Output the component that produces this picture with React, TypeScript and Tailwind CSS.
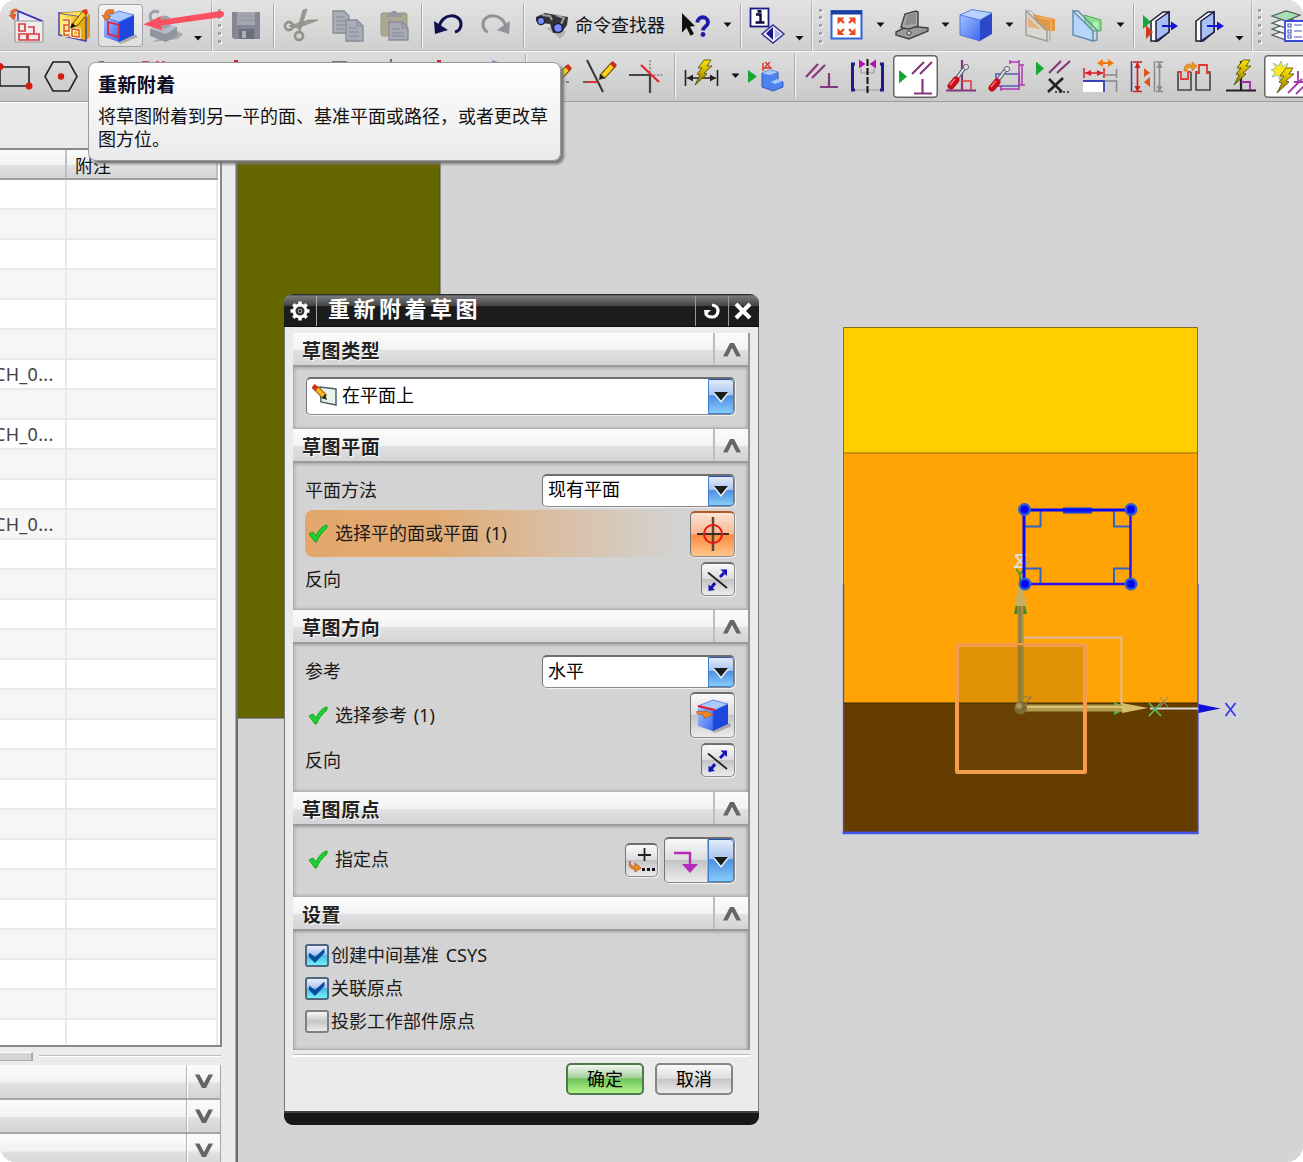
import React from "react";

type Kids = { children?: React.ReactNode };

const FONT = "font-['Noto_Sans','Noto_Sans_CJK_SC',sans-serif]";

/* A toolbar slot; its drawing uses window coordinates. */
function Slot({ x, w, y = 4, className = "", children }: { x: number; w: number; y?: number; className?: string } & Kids) {
  return (
    <div className={"h-[43px] shrink-0 " + className}>
      <svg width={w} height={43} viewBox={`${x} ${y} ${w} 43`} fill="none" className="block">
        {children}
      </svg>
    </div>
  );
}

function Caret({ x, w, cx, cy, y = 4 }: { x: number; w: number; cx: number; cy: number; y?: number }) {
  return (
    <Slot x={x} w={w} y={y}>
      <path d={`M${cx - 4} ${cy - 2}h8l-4 4.5z`} fill="#111" />
    </Slot>
  );
}

function Sep({ className }: { className: string }) {
  return (
    <div className={"flex h-[44px] shrink-0 justify-center " + className}>
      <div className="w-px bg-[#a9a9a9]" />
      <div className="w-px bg-[#f6f6f6]" />
    </div>
  );
}

function GroupEdge({ className }: { className: string }) {
  return (
    <div className={"flex h-[50px] shrink-0 justify-center " + className}>
      <div className="w-px bg-[#b0b0b0]" />
      <div className="w-px bg-[#f3f3f3]" />
    </div>
  );
}

function Grip({ className }: { className: string }) {
  return (
    <div className={"flex h-[34px] shrink-0 flex-col items-center justify-between " + className}>
      {[0, 1, 2, 3, 4].map((i) => (
        <div key={i} className="h-[3px] w-[3px] bg-[#a2a2a2] shadow-[1px_1px_0_#fff]" />
      ))}
    </div>
  );
}

function Cube({ dx = 0, dy = 0 }: { dx?: number; dy?: number }) {
  return (
    <g transform={`translate(${dx} ${dy})`}>
      <path d="M14 33l18-8 3 3-17 7z" fill="#777" opacity=".5" />
      <path d="M1 8L16 13V33L1 28z" fill="url(#cubeL)" />
      <path d="M16 13L31 6V26L16 33z" fill="#1f46dd" />
      <path d="M1 8L16 2 31 6 16 13z" fill="#a9cbff" />
      <path d="M1 8L16 2 31 6 16 13z M16 13V33" fill="none" stroke="#3a62dc" strokeWidth=".7" />
    </g>
  );
}

function Defs() {
  return (
    <svg width="0" height="0" className="absolute">
      <defs>
        <linearGradient id="cubeL" x1="0" y1="0" x2="1" y2="1">
          <stop offset="0" stopColor="#a4c4ff" />
          <stop offset="1" stopColor="#3b66ef" />
        </linearGradient>
        <linearGradient id="bolt" x1="0" y1="0" x2="0" y2="1">
          <stop offset="0" stopColor="#ffe600" />
          <stop offset="1" stopColor="#8a7400" />
        </linearGradient>
        <linearGradient id="gold" x1="0" y1="0" x2="1" y2="0">
          <stop offset="0" stopColor="#fff36a" />
          <stop offset="1" stopColor="#e5a000" />
        </linearGradient>
      </defs>
    </svg>
  );
}

function Pencil({ x, y }: { x: number; y: number }) {
  return (
    <g transform={`translate(${x} ${y})`}>
      <path d="M1 15L13 2" stroke="#5c4a00" strokeWidth="6.5" />
      <path d="M2 14L12 3" stroke="#ffd319" strokeWidth="4.5" />
      <path d="M11 4L14 1" stroke="#d02a1a" strokeWidth="5.5" />
      <path d="M-2 18l1-6 5 4z" fill="#222" />
    </g>
  );
}

function Bolt({ x, y }: { x: number; y: number }) {
  return (
    <path
      transform={`translate(${x} ${y})`}
      d="M9 0L16 0 12 6 17 6 9 13 12 14 0 25 5 15 2 14 7 8 3 8z"
      fill="url(#bolt)"
      stroke="#4b4300"
      strokeWidth=".8"
    />
  );
}

function Screwdriver({ x, y }: { x: number; y: number }) {
  return (
    <g transform={`translate(${x} ${y})`}>
      <path d="M9 15L18 3" stroke="#59606c" strokeWidth="4" />
      <path d="M9 15L18 3" stroke="#dfe3ea" strokeWidth="2" />
      <circle cx="18" cy="4" r="2.6" fill="#dfe3ea" stroke="#667" />
      <path d="M3 23L8 17" stroke="#c3101d" strokeWidth="7" strokeLinecap="round" />
      <path d="M2 22L7 16" stroke="#ff7a7a" strokeWidth="1.5" />
    </g>
  );
}

const rowBg = "bg-gradient-to-b flex shrink-0 items-center overflow-hidden";

function TopRow() {
  return (
    <div className={rowBg + " h-[51px] from-[#e3e3e3] to-[#cfcfcf] shadow-[inset_0_-1px_0_#bcbcbc]"}>
      <Slot x={0} w={50}>
        <path d="M18 25V11L42 21V25" fill="#e6ecf3" stroke="#4038b8" strokeWidth="1.4" />
        <path d="M15 21H43V42H15z" fill="#ececec" stroke="#999" strokeWidth="1.2" />
        <path d="M18 11L42 21" stroke="#4038b8" strokeWidth="1.4" />
        <path d="M19 24h6v7h-6zM28 27h6v7h-6M19 34h8v6h-8zM28 34h11v6H28z" stroke="#e03a46" strokeWidth="1.7" />
        <path d="M17 9c-7 0-7 4-5 7l-3-1 5 5 2-6-2 1c-1-2 0-4 3-4z" fill="#f26a2a" stroke="#b93a10" strokeWidth=".6" />
      </Slot>
      <Slot x={50} w={48}>
        <path d="M86 17l4-2v22l-4 3z" fill="#e09a00" />
        <path d="M59 13L86 17V41L59 35z" fill="url(#gold)" stroke="#4a3fb4" strokeWidth="1.5" />
        <path d="M59 13L86 11 89 15 86 17" fill="#ffe45b" stroke="#8c6b10" strokeWidth=".6" />
        <path d="M63 20h6v5h-5v6h5v-5M64 31v4h5M72 29l7 1v7l-7-1z" stroke="#fff6d8" strokeWidth="3.4" />
        <path d="M63 20h6v5h-5v6h5v-5M64 31v4h5M72 29l7 1v7l-7-1z" stroke="#d9531e" strokeWidth="1.5" />
        <path d="M71 28l3-6 9-11 4 3-9 11z" fill="#ffcc1e" stroke="#333" strokeWidth=".8" />
        <path d="M82 10l5-1 1 4-3 2z" fill="#db3a21" />
        <path d="M70 28l2-5 4 3z" fill="#111" />
      </Slot>
      <Slot x={98} w={45} className="rounded-[4px] bg-gradient-to-b from-[#f3f3f3] to-[#dedede] ring-1 ring-inset ring-[#a4a4a4]">
        <Cube dx={103} dy={9} />
        <path d="M108 22l11 3v12l-11-3z" stroke="#e6203a" strokeWidth="1.8" />
        <path d="M114 10c-7-2-10 2-9 6l-3-1 4 6 5-5-3 0c-1-2 2-4 5-2z" fill="#f47a20" stroke="#b54108" strokeWidth=".6" />
      </Slot>
      <Slot x={143} w={45}>
        <path d="M152 42l26-3 5-5-8-4z" fill="#aaa" />
        <path d="M150 29l12-5 15 3v9l-11 6-16-6z" fill="#8f949f" />
        <path d="M150 29l16 5 11-7-12-4z" fill="#b8bcc6" />
        <circle cx="165" cy="22" r="6.5" fill="#9ca1ad" />
        <path d="M159 12c-8-3-11 4-7 9" stroke="#9ca0aa" strokeWidth="3" />
      </Slot>
      <Caret x={188} w={20} cx={198} cy={38} />
      <GroupEdge className="w-[7px]" />
      <Grip className="w-[9px]" />
      <Slot x={224} w={46}>
        <path d="M232 12H260V39H234L232 37z" fill="#858794" />
        <path d="M237 12H255V25H237z" fill="#a4a6ae" />
        <path d="M237 16h18M237 20h18" stroke="#92949e" />
        <path d="M239 29H254V39H239z" fill="#6b6e7c" />
        <path d="M242 31h4v7h-4z" fill="#aeb0b6" />
      </Slot>
      <Sep className="w-[8px]" />
      <Slot x={278} w={47}>
        <path d="M307 9l-7 22-2-3 5-18zM318 20l-21 8-8-2 20-6z" fill="#9a9c93" stroke="#888a80" strokeWidth=".8" />
        <circle cx="289" cy="26" r="4" stroke="#94938a" strokeWidth="2.8" />
        <circle cx="299" cy="36" r="4" stroke="#94938a" strokeWidth="2.8" />
      </Slot>
      <Slot x={325} w={47}>
        <path d="M333 11h11l5 5v17h-16z" fill="#a9adb5" stroke="#888c9a" strokeWidth="1.3" />
        <path d="M336 17h8M336 21h10M336 25h9M336 29h7" stroke="#858997" />
        <path d="M346 20h11l6 6v15h-17z" fill="#a9adb5" stroke="#888c9a" strokeWidth="1.3" />
        <path d="M357 20v6h6M349 28h8M349 32h10M349 36h10" stroke="#858997" />
      </Slot>
      <Slot x={372} w={46}>
        <rect x="381" y="13" width="26" height="23" rx="2" fill="#aca790" stroke="#9b977f" />
        <path d="M387 17v-4h4c0-3 6-3 6 0h5v4z" fill="#9698a2" />
        <path d="M389 22h13l6 6v12h-19z" fill="#a8abb3" stroke="#888c9a" strokeWidth="1.3" />
        <path d="M402 22v6h6M392 29h8M392 33h12M392 36h12" stroke="#858997" />
      </Slot>
      <Sep className="w-[8px]" />
      <Slot x={426} w={46}>
        <path d="M439 28C441 12 461 13 461 24c0 4-2 7-6 8" stroke="#10104e" strokeWidth="3" />
        <path d="M434 21l1 13 13-4z" fill="#10104e" />
      </Slot>
      <Slot x={472} w={47}>
        <path d="M506 28C504 12 483 13 483 24c0 4 2 7 5 8" stroke="#909298" strokeWidth="3" />
        <path d="M510 21l-1 13-12-4z" fill="#909298" />
      </Slot>
      <Sep className="w-[9px]" />
      <Slot x={528} w={44}>
        <path d="M546 28l10 7 4 4 6-7-8-6z" fill="#9a9a9a" opacity=".6" />
        <path d="M536 17l9-4 11 2 12 2-1 8-5 7-9 1-3-9-9-1-5-2z" fill="#333" />
        <path d="M542 15l8 1 2 4M556 15l8 3-3 6" stroke="#9ba0a8" strokeWidth="2" />
        <circle cx="541" cy="21" r="3.6" fill="#7b8cff" stroke="#1d1d40" strokeWidth="1.4" />
        <circle cx="558" cy="28" r="4.5" fill="#7b8cff" stroke="#1d1d40" strokeWidth="1.6" />
      </Slot>
      <div className="w-[100px] shrink-0 whitespace-nowrap pl-[3px] text-[18px] leading-[43px] text-[#111]">命令查找器</div>
      <Slot x={672} w={44}>
        <path d="M682 13l13 13-5 .8 4 7-3.500 2-4-8-4.500 5z" fill="#111" />
        <path d="M697.500 22.500c0-7 10.500-7 10.500 0 0 4-5 4-5 8" stroke="#1c1ca8" strokeWidth="3.8" />
        <circle cx="703" cy="34.500" r="2.400" fill="#1c1ca8" />
      </Slot>
      <Caret x={716} w={22} cx={727.5} cy={24.5} />
      <Sep className="w-[6px]" />
      <Slot x={744} w={46}>
        <rect x="750.500" y="8.500" width="18" height="18" fill="#fff" stroke="#1a1a86" strokeWidth="1.800" />
        <path d="M756 14.500h4.500v7M755.500 22.500h9" stroke="#0b0b3c" strokeWidth="2.400" />
        <rect x="757.500" y="10" width="4" height="2.800" fill="#0b0b3c" />
        <path d="M762 34l11-9 11 9-11 9z" fill="#f1f1ff" stroke="#33338e" strokeWidth="1.500" />
        <path d="M773 27v13l-7-6.500z" fill="#18188a" />
        <path d="M775 29l6 5-6 5z" fill="#aeb2e6" />
      </Slot>
      <Caret x={790} w={18} cx={799.5} cy={38} />
      <GroupEdge className="w-[8px]" />
      <Grip className="w-[9px]" />
      <Slot x={825} w={43}>
        <rect x="831.500" y="11" width="30" height="27.500" fill="#fff" stroke="#2f62d8" strokeWidth="2" />
        <path d="M831 12.500H862" stroke="#1c3ea0" strokeWidth="4" />
        <path d="M844 23l-5-5M849 23l5-5M844 29l-5 5M849 29l5 5" stroke="#ee4a22" strokeWidth="2.400" />
        <path d="M837.500 17.500h7l-7 7zM855.500 17.500v7l-7-7zM837.500 35v-7l7 7zM855.500 35h-7l7-7z" fill="#ee4a22" />
      </Slot>
      <Caret x={868} w={22} cx={880.5} cy={24.5} />
      <Slot x={890} w={44}>
        <path d="M896 32l12-6 20 2v3l-19 8-13-4z" fill="#9b9b9b" stroke="#444" strokeWidth="1.400" />
        <path d="M901 27l4-13 11-3 2 1v14l-9 3-6-1z" fill="#a8a8a8" stroke="#444" strokeWidth="1.500" />
        <path d="M905 25l2-10 9-2v11z" fill="#8d8d8d" />
        <circle cx="909" cy="33" r="2" fill="#ddd" stroke="#444" />
      </Slot>
      <Caret x={934} w={20} cx={945.5} cy={24.5} />
      <Slot x={954} w={44}>
        <path d="M960 15L980 20V41L960 35z" fill="url(#cubeL)" />
        <path d="M980 20L992 13V34L980 41z" fill="#2c48c8" />
        <path d="M960 15L972 9.500 992 13 980 20z" fill="#b8d2ff" stroke="#4267d6" strokeWidth=".800" />
        <path d="M960 15V35L980 41" stroke="#4267d6" strokeWidth=".800" />
      </Slot>
      <Caret x={998} w={22} cx={1009.5} cy={24.5} />
      <Slot x={1020} w={44}>
        <path d="M1033 14l22 5v12l-17-1z" fill="#e8963c" />
        <path d="M1038 17l13 3v11" stroke="#f5bd78" />
        <path d="M1026 11l21 20v10l-21-6z" fill="#dcd8d3" fillOpacity=".85" stroke="#9d9a95" strokeWidth="1.400" />
        <path d="M1026 11h5l19 19v10h-3" stroke="#a9a49e" fill="none" />
        <path d="M1028 17l12 12-12-2z" fill="#e9a05a" opacity=".7" />
      </Slot>
      <Slot x={1064} w={44}>
        <path d="M1084 15l17 5v11h-14z" fill="#8adf8a" stroke="#57a862" />
        <path d="M1093 22h5v7h-5z" fill="#b8f2b4" />
        <path d="M1073 11l20 20v10l-20-6z" fill="#b8d4fb" stroke="#5d8cae" strokeWidth="1.400" />
        <path d="M1073 11h5l19 19v10l-4 1" stroke="#5d8cae" strokeWidth="1.300" />
      </Slot>
      <Caret x={1108} w={22} cx={1120.5} cy={24.5} />
      <Sep className="w-[7px]" />
      <Slot x={1137} w={47}>
        <path d="M1151 21l12-9h6v20l-11 9h-7z" fill="#fafafa" stroke="#1d1d2e" strokeWidth="1.500" />
        <path d="M1156 21l13-9v20l-13 9z" fill="#a9bff2" stroke="#1d1d4e" strokeWidth="1.500" />
        <path d="M1162 26h10" stroke="#1414d8" strokeWidth="2" />
        <path d="M1171 21.500l7 4.500-7 4.500z" fill="#1414d8" />
        <path d="M1143 15l8 7-8 7z" fill="#16a83a" />
        <path d="M1146 25l7 7-7 7z" fill="#d23b1e" />
      </Slot>
      <Slot x={1184} w={46}>
        <path d="M1196 21l12-9h6v20l-11 9h-7z" fill="#fafafa" stroke="#1d1d2e" strokeWidth="1.500" />
        <path d="M1201 21l13-9v20l-13 9z" fill="#a9bff2" stroke="#1d1d4e" strokeWidth="1.500" />
        <path d="M1207 26h10" stroke="#1414d8" strokeWidth="2" />
        <path d="M1217 21.500l7 4.500-7 4.500z" fill="#1414d8" />
      </Slot>
      <Caret x={1230} w={18} cx={1239.5} cy={38} />
      <GroupEdge className="w-[7px]" />
      <Grip className="w-[9px]" />
      <Slot x={1264} w={39}>
        {[35, 29, 23].map((y) => (
          <path key={y} d={`M1272 ${y}l14-5 14 4-14 6z`} fill="#eef5ee" stroke="#4e5a52" strokeWidth="1.200" />
        ))}
        <path d="M1272 16l14-5 14 4-14 6z" fill="#a9dfb4" stroke="#4e5a52" strokeWidth="1.200" />
        <path d="M1285 21h20v20h-20z" fill="#fff" stroke="#3a4bd8" strokeWidth="1.800" />
        <path d="M1288 24h3v3h-3zM1288 30h3v3h-3zM1288 35h3v3h-3zM1294 25h8M1294 31h8M1294 37h8" stroke="#4a58c9" strokeWidth="1.200" />
      </Slot>
    </div>
  );
}

function SecondRow() {
  const y = 55;
  return (
    <div className={rowBg + " h-[51px] border-b border-[#9b9b9b] from-[#dedede] to-[#c9c9c9] shadow-[inset_0_1px_0_#f4f4f4]"}>
      <Slot x={0} w={40} y={y}>
        <path d="M0 67H29V86H0z" stroke="#222" strokeWidth="1.600" />
        <circle cx="0" cy="66.500" r="3.500" fill="#d41b10" />
        <circle cx="29" cy="86" r="3.500" fill="#d41b10" />
      </Slot>
      <Slot x={40} w={45} y={y}>
        <path d="M45 76.500L53 62H69L77 76.500 69 91H53z" stroke="#222" strokeWidth="1.600" />
        <circle cx="61" cy="76.500" r="3.200" fill="#d41b10" />
      </Slot>
      <Slot x={85} w={436} y={y}>
        <path d="M99 62h5M332 62h15M391 59v4" stroke="#555" strokeWidth="1.600" />
        <path d="M142 62h7M156 62h3M162 62h3" stroke="#d02030" strokeWidth="1.400" />
        <path d="M236 60v3M439 60v3" stroke="#d02030" strokeWidth="4" />
        <path d="M492 60l10 3h-10z" fill="#7c8fc8" />
      </Slot>
      <Sep className="w-[10px]" />
      <Slot x={531} w={44} y={y}>
        <Pencil x={556} y={65} />
        <path d="M556 82h15" stroke="#333" strokeDasharray="3 2" />
      </Slot>
      <Slot x={575} w={47} y={y}>
        <path d="M587 60L603 92" stroke="#333" strokeWidth="2" />
        <path d="M583 82h6" stroke="#444" strokeWidth="1.600" />
        <path d="M588 82h10" stroke="#e82020" strokeWidth="1.800" />
        <Pencil x={601} y={62} />
      </Slot>
      <Slot x={622} w={48} y={y}>
        <path d="M629 75H650V93" stroke="#444" strokeWidth="2.200" />
        <path d="M650 60V74M650 75H663" stroke="#555" strokeDasharray="2 1.500" />
        <path d="M641 65L659 82" stroke="#ea1f2a" strokeWidth="2.200" />
      </Slot>
      <Sep className="w-[9px]" />
      <Slot x={679} w={46} y={y}>
        <path d="M685.500 70V86M717.500 70V86M687 78H716" stroke="#222" strokeWidth="1.600" />
        <path d="M687 78l6-3.500v7zM716 78l-6-3.500v7z" fill="#222" />
        <Bolt x={695} y={60} />
      </Slot>
      <Caret x={725} w={20} y={y} cx={735.5} cy={75.5} />
      <Slot x={745} w={45} y={y}>
        <path d="M748 70l9 6.500-9 6.500z" fill="#16a830" />
        <path d="M762 73l8-3 8 2v8l5 2v5l-10 4-11-4z" fill="#4d83ec" stroke="#2e5cc0" />
        <path d="M762 73l8-3 8 2-8 3zM771 82l6-3 6 2-8 3z" fill="#a9caff" />
        <path d="M763 63v8M763 68h9M765 62l5 5M770 62l-5 5" stroke="#e03024" strokeWidth="1.400" />
      </Slot>
      <Sep className="w-[9px]" />
      <Slot x={799} w={46} y={y}>
        <path d="M806 77L818 64M812 78L825 65M829 73V87M820 87H838" stroke="#84397c" strokeWidth="2.200" />
      </Slot>
      <Slot x={845} w={48} y={y}>
        <path d="M855 64H852.500V90H855M880 64H882.500V90H880" stroke="#1c1c8a" strokeWidth="3" />
        <path d="M855 90H880M861 69V73H874V69" stroke="#999" strokeWidth="1.200" />
        <path d="M867.500 59V93" stroke="#111" strokeWidth="2" strokeDasharray="7 2" />
        <path d="M859 59.500l6.500 4.500-6.500 4.500zM876 59.500l-6.500 4.500 6.500 4.500z" fill="#b214b4" />
      </Slot>
      <Slot x={893} w={45} y={y} className="rounded-[4px] bg-white ring-[1.5px] ring-inset ring-[#666]">
        <path d="M899 70l8 6.500-8 7z" fill="#16a830" />
        <path d="M912 74L924 62M920 74L932 62M922.500 79V93M914 93.500H932" stroke="#84397c" strokeWidth="2.200" />
      </Slot>
      <Slot x={938} w={45} y={y}>
        <path d="M962 60V90M946 90.500H976" stroke="#84397c" strokeWidth="2.200" />
        <path d="M962 81H971V90" stroke="#e63a3a" strokeWidth="1.600" />
        <Screwdriver x={948} y={63} />
      </Slot>
      <Slot x={983} w={48} y={y}>
        <path d="M996 74H1019V86H996z" stroke="#5a58b8" strokeWidth="1.600" />
        <path d="M1010 60V64M1019 60V90M1010 62H1019M1001 85V91M1001 89H1019M1022 65V85M1019 65H1024M1019 85H1025" stroke="#b13ab3" strokeWidth="1.500" />
        <Screwdriver x={989} y={65} />
      </Slot>
      <Slot x={1031} w={46} y={y}>
        <path d="M1036 61.500l8 7-8 7z" fill="#16a830" />
        <path d="M1049 73L1061 61M1057 73L1070 61" stroke="#84397c" strokeWidth="2.200" />
        <path d="M1049 79L1062 92M1063 78L1048 92" stroke="#222" strokeWidth="2.600" />
        <path d="M1055 92H1071" stroke="#222" strokeWidth="1.500" strokeDasharray="2 2" />
      </Slot>
      <Slot x={1077} w={46} y={y}>
        <path d="M1083 82H1104V92H1083z" fill="#fff" />
        <path d="M1083 81H1104V92" stroke="#3940b4" strokeWidth="1.800" />
        <path d="M1084 68V78M1104 68V78M1085 73H1103" stroke="#d91f2a" strokeWidth="1.500" />
        <path d="M1085 73l6-3v6zM1103 73l-6-3v6z" fill="#d91f2a" />
        <path d="M1116.500 69V78M1105 75H1116M1105 81H1116.500V92" stroke="#888" strokeWidth="1.500" />
        <path d="M1097 63l6-4v3h5v-3l6 4-6 4v-3h-5v3z" fill="#f07a1a" />
      </Slot>
      <Slot x={1123} w={47} y={y}>
        <path d="M1131.500 61V92" stroke="#3a3aa8" strokeWidth="1.500" />
        <path d="M1154.500 61V92" stroke="#888" strokeWidth="1.500" />
        <path d="M1133 62H1142M1133 91.500H1142M1137.500 63V91" stroke="#c92020" strokeWidth="1.700" />
        <path d="M1137.500 62l-3 6h6zM1137.500 92l-3-6h6z" fill="#c92020" />
        <path d="M1156 62H1163M1156 91.500H1163M1159.500 63V91" stroke="#8b8b8b" strokeWidth="1.700" />
        <path d="M1159.500 62l-3 6h6zM1159.500 92l-3-6h6z" fill="#8b8b8b" />
        <path d="M1144 68l6 5-6 4zM1150 77l-6 5 6 5z" fill="#e0561a" />
      </Slot>
      <Slot x={1170} w={48} y={y}>
        <path d="M1181 72H1178V90H1191V72M1198 72H1196V90H1210V72H1207" stroke="#444" strokeWidth="1.600" />
        <path d="M1178 72h3v7h7v-7h3M1196 73h3v-8h8v8h3" stroke="#e03a30" strokeWidth="1.800" />
        <path d="M1184 71c0-8 6-8 8-5v-4l5 4-5 5v-3c-3-2-5 0-5 3z" fill="#f09a20" stroke="#b96a08" strokeWidth=".600" />
      </Slot>
      <Slot x={1218} w={46} y={y}>
        <path d="M1241 61V90M1226 90.500H1256" stroke="#222" strokeWidth="2.200" />
        <path d="M1241 82H1250V90" stroke="#a524a7" strokeWidth="1.800" />
        <Bolt x={1234} y={60} />
      </Slot>
      <Slot x={1264} w={45} y={y} className="rounded-[4px] bg-white ring-[1.5px] ring-inset ring-[#666]">
        <path d="M1281 61l2 6 5-4-2 6 6 2-6 2 2 5-6-3-2 5-2-5-6 2 3-5-4-2 5-2-3-5 6 3z" fill="#ffe71e" stroke="#83b6b8" strokeWidth=".800" />
        <path d="M1288 93L1302 79M1296 94L1306 84M1298 71V82M1294 82h9" stroke="#a63ab0" strokeWidth="1.800" />
        <Bolt x={1277} y={68} />
      </Slot>
    </div>
  );
}

function Arrowhead({ up }: { up?: boolean }) {
  return (
    <svg width="18" height="14" viewBox="0 0 18 14" className={up ? "" : "rotate-180"}>
      <path d="M0 13.500L7 0h4l7 13.500h-4.500L9 5 4.500 13.500z" fill="#666" />
    </svg>
  );
}

const glossy = "bg-[linear-gradient(to_bottom,#fbfbfb_0%,#f1f3f2_52%,#e0e1e2_54%,#d3d4d6_100%)]";

function SideBar() {
  const rows = Array.from({ length: 29 }, (_, i) => i);
  return (
    <div className="flex w-[238px] shrink-0 flex-col border-r-2 border-[#6c6c6c] bg-[#ebebeb] shadow-[inset_-1px_0_0_#aaa]">
      <div className="h-[46px] shrink-0 border-t border-white" />
      <div className="flex h-[899px] w-[222px] shrink-0 flex-col overflow-hidden border-b-2 border-r-2 border-t-2 border-[#888] bg-white">
        <div className={"flex h-[30px] w-[218px] shrink-0 border-b-2 border-[#a0a0a0] " + glossy}>
          <div className="w-[67px] shrink-0 border-r-2 border-[#c0c0c0]" />
          <div className="flex-1 border-r-2 border-[#c0c0c0] pl-[8px] text-[18px] leading-[32px] text-[#111]">附注</div>
        </div>
        {rows.map((i) => (
          <div key={i} className="flex h-[30px] w-[218px] shrink-0 border-b-2 border-[#e9e9e9] odd:bg-[#f6f6f6]">
            <div className="w-[67px] shrink-0 overflow-hidden border-r-2 border-[#e9e9e9] text-[18px] leading-[29px] text-[#444]">
              <span className="-ml-[6px] inline-block tracking-[0.300px]">{i === 6 || i === 8 || i === 11 ? "CH_0..." : ""}</span>
            </div>
            <div className="flex-1 border-r-2 border-[#ececec]" />
          </div>
        ))}
      </div>
      <div className="flex h-[18px] shrink-0 items-center">
        <div className="h-[9px] w-[33px] border-b border-r-2 border-t border-[#aaa] border-t-white bg-[#d4d4d4]" />
        <div className="ml-[6px] h-[2px] w-[182px] border-b border-t border-b-white border-t-[#bdbdbd]" />
      </div>
      {[0, 1, 2].map((i) => (
        <div key={i} className={"flex h-[34.500px] w-[221px] shrink-0 items-stretch border-b-2 border-r border-[#a6a6a6] " + glossy}>
          <div className="w-[187px] border-r border-[#b5b5b5]" />
          <div className="flex flex-1 items-center justify-center border-l border-white">
            <Arrowhead />
          </div>
        </div>
      ))}
    </div>
  );
}

function Scene() {
  return (
    <svg width="1065" height="1060" viewBox="238 102 1065 1060" fill="none" className="block">
      <path d="M237 102H440V718H237z" fill="#666600" />
      <path d="M440 102V718M238 718H440" stroke="#4b4b3a" />
      <path d="M843 327H1198V453H843z" fill="#ffcf00" />
      <path d="M843 453H1198V703H843z" fill="#ffa404" />
      <path d="M843 703H1198V832H843z" fill="#663d00" />
      <path d="M843.500 584V327.500H1197.500V584M843 453H1198" stroke="#8a6a20" />
      <path d="M843 703H1198" stroke="#3a2500" />
      <path d="M843.500 584V832.500H1198V584" stroke="#4a4fc0" strokeWidth="1.300" />
      <path d="M842.500 833H1198.500" stroke="#4455ee" strokeWidth="2.400" />
      <g stroke="#2f63cc" strokeWidth="2">
        <path d="M1024 526.500H1040.500V510M1131 526.500H1114V510M1024 568.500H1040.500V584M1131 568.500H1114V584" />
      </g>
      <path d="M1063 510.500H1092" stroke="#1442e0" strokeWidth="6" strokeLinecap="butt" />
      <path d="M957 645H1085V772H957z" fill="#7d5313" fillOpacity=".22" />
      <path d="M1024 637.500H1121.500V706" stroke="#dcbca0" strokeWidth="2" />
      <path d="M1014 614l6-30 7 30z" fill="#3f8a28" />
      <path d="M1017.500 706V604h6V706z" fill="#a3914a" />
      <path d="M1019 706V604h2V706z" fill="#8a7a3c" />
      <path d="M1014.500 606l6-29 6 29z" fill="#c8b062" />
      <path d="M1114 702l14 6-14 7z" fill="#50b450" />
      <path d="M1022 704.500H1122V711.500H1022z" fill="#b09a4e" />
      <path d="M1022 706H1122V708H1022z" fill="#dcc473" />
      <path d="M1122 703l26 5-26 5z" fill="#d6bf6a" />
      <path d="M957 645H1085V772H957z" stroke="#f39c49" strokeWidth="4" strokeLinejoin="round" />
      <path d="M1017.500 706V645h6V706z" fill="#96802c" opacity=".75" />
      <circle cx="1020.500" cy="708" r="6.500" fill="#7d6a38" />
      <circle cx="1019" cy="706" r="3" fill="#a8955a" />
      <path d="M1023 697h8l-6 8" stroke="#857a58" strokeWidth="1.200" />
      <path d="M1150 708.500H1198" stroke="#ddd" strokeWidth="2" />
      <path d="M1149 703l12 13M1161 703l-12 13" stroke="#5cb862" strokeWidth="1.800" />
      <path d="M1160 697l8 10M1168 697l-8 10" stroke="#9a8a60" strokeWidth="1.200" />
      <path d="M1198.500 704l22 4.500-22 4.500z" fill="#0f0fd8" />
      <path d="M1225.500 703l10 13M1235.500 703l-10 13" stroke="#3737f0" strokeWidth="1.800" />
      <path d="M1015 555h10l-10 12h10M1015 555l10 12" stroke="#dedede" strokeWidth="2" />
      <path d="M1023 560l4 4 4-5M1027 564l-4 6" stroke="#aaa17c" strokeWidth="1.200" />
      <path d="M1016 569l4 5 4-5M1020 574v7" stroke="#3f9a35" strokeWidth="1.800" />
      <path d="M1024 510V584" stroke="#0808ff" strokeWidth="3" />
      <path d="M1024 510H1131" stroke="#0808ff" strokeWidth="3" />
      <path d="M1130.500 510V584H1024" stroke="#2a10f0" strokeWidth="2.400" />
      {[[1024.5, 509.5], [1131, 509.5], [1025, 584], [1131, 584]].map(([cx, cy]) => (
        <g key={cx + "-" + cy}>
          <circle cx={cx} cy={cy} r="6.500" fill="#2a5cd4" />
          <circle cx={cx} cy={cy} r="4" fill="#0505f8" />
        </g>
      ))}
    </svg>
  );
}

function Section({ title, bodyClass, children }: { title: string; bodyClass: string } & Kids) {
  return (
    <>
      <div className={"flex h-[34px] shrink-0 border-b-2 border-[#9a9a9a] " + glossy}>
        <div className="flex-1 border-r-2 border-[#bdbdbd] pl-[9px] text-[19px] font-bold leading-[37px] tracking-[0.600px] text-[#222] [text-shadow:1px_1px_0_#fff]">
          {title}
        </div>
        <div className="flex w-[33px] items-center justify-center pt-px">
          <Arrowhead up />
        </div>
      </div>
      <div className={"flex shrink-0 flex-col bg-[#d3d3d3] pl-[12px] pr-[13px] text-[18px] text-[#1a1a1a] shadow-[inset_1px_0_4px_#9c9c9c,inset_-1px_0_3px_#aaa] " + bodyClass}>
        {children}
      </div>
    </>
  );
}

function DropBtn({ className = "" }: { className?: string }) {
  return (
    <div
      className={
        "flex w-[26px] shrink-0 items-center justify-center rounded-r-[4px] border border-[#3f7fd0] border-t-[#1f50c0] bg-[linear-gradient(to_bottom,#e4ecfb_0%,#a9c3ee_45%,#4f8fdf_48%,#86ccfb_100%)] " +
        className
      }
    >
      <svg width="16" height="11" viewBox="0 0 16 11">
        <path d="M0 1H16L8 11z" fill="#e6f2ff" />
        <path d="M1 0H15L8 8.500z" fill="#1c1c1c" />
      </svg>
    </div>
  );
}

const edge = "border border-[#8a8a8a] border-t-2 border-t-[#6e6e6e] border-l-[#747474] shadow-[1px_1px_1px_#f2f2f2]";

function Combo({ className, children }: { className: string } & Kids) {
  return (
    <div className={"flex shrink-0 items-stretch overflow-hidden rounded-[5px] bg-white text-black " + edge + " " + className}>
      <div className="flex flex-1 items-center gap-[4px] pb-[2px] pl-[5px]">{children}</div>
      <DropBtn className="pt-[2px]" />
    </div>
  );
}

const silver = "bg-[linear-gradient(to_bottom,#fafafa_0%,#dcdcdc_48%,#c4c4c6_50%,#ececec_100%)]";

function IconBtn({ className, children }: { className: string } & Kids) {
  return <div className={"flex shrink-0 items-center justify-center rounded-[5px] " + edge + " " + className}>{children}</div>;
}

function Tick() {
  return (
    <svg width="20" height="19" viewBox="0 0 20 19" className="shrink-0">
      <path d="M1 10l4-2 3 4C11 6 14 2 19 1l0 3C14 8 11 12 8.500 18H7z" fill="#1fd02f" stroke="#12a51f" />
    </svg>
  );
}

function ReverseIcon() {
  return (
    <svg width="22" height="24" viewBox="0 0 22 24">
      <path d="M1 4.500L20 20" stroke="#222" strokeWidth="1.800" />
      <path d="M13 9L17 5M8 15L4 20" stroke="#1212b8" strokeWidth="3" />
      <path d="M13.500 1.500h6.500v6.500zM1.500 23v-6.500l6.500 5.500z" fill="#1212b8" />
    </svg>
  );
}

function Check({ on, label }: { on?: boolean; label: string }) {
  return (
    <div className="flex h-[33px] items-center gap-[2px]">
      <div
        className={
          "flex h-[23px] w-[24px] items-center justify-center rounded-[3px] border-2 " +
          (on
            ? "border-[#4e6580] bg-[linear-gradient(to_bottom,#e9effc_0%,#a8c4ee_48%,#4cb8e4_50%,#72f2fa_100%)]"
            : "border-[#808080] bg-[linear-gradient(to_bottom,#f6f6f6_0%,#c6c6c8_50%,#ececec_100%)]")
        }
      >
        {on && (
          <svg width="18" height="17" viewBox="0 0 18 17">
            <path d="M1 5.500l6 4.500L16.500 1.500V6L7 16 1 10z" fill="#0c4c9c" />
          </svg>
        )}
      </div>
      <span className="whitespace-pre [word-spacing:2px]">{label}</span>
    </div>
  );
}

function Dialog() {
  return (
    <div className="absolute left-[46px] top-[192px] flex h-[831px] w-[475px] flex-col overflow-hidden rounded-[9px] bg-[#ebebeb] shadow-[inset_0_0_0_1px_#777]">
      <div className="flex h-[33px] shrink-0 items-center bg-[linear-gradient(to_bottom,#111_0%,#77797b_6%,#454545_35%,#1c1c1c_38%,#1c1c1c_96%,#000_100%)] text-white">
        <div className="flex h-[30px] w-[32px] items-center justify-center">
          <svg width="20" height="20" viewBox="-10 -10 20 20">
            {[0, 45, 90, 135].map((a) => (
              <path key={a} d="M0-9.500V9.500" transform={`rotate(${a})`} stroke="#fff" strokeWidth="3.500" />
            ))}
            <circle r="6" fill="#333" stroke="#fff" strokeWidth="3" />
            <circle r="2.200" fill="#aaa" />
            <circle r="1.200" fill="#222" />
          </svg>
        </div>
        <div className="h-[30px] w-px bg-[#aaa]" />
        <div className="flex-1 pb-[4px] pl-[11px] text-[22px] font-bold leading-[29px] tracking-[3.500px]">重新附着草图</div>
        <div className="h-[30px] w-px bg-[#999]" />
        <div className="flex w-[32px] justify-center">
          <svg width="18" height="18" viewBox="0 0 18 18" fill="none">
            <path d="M9 3c9 1 7 12 0 12-4 0-6-2-6-4" stroke="#fff" strokeWidth="3.200" />
            <path d="M1 8h7l-6 6z" fill="#fff" />
          </svg>
        </div>
        <div className="h-[30px] w-px bg-[#999]" />
        <div className="flex w-[30px] justify-center pr-[2px]">
          <svg width="18" height="18" viewBox="0 0 18 18">
            <path d="M2 2L16 16M16 2L2 16" stroke="#fff" strokeWidth="4.200" />
          </svg>
        </div>
      </div>
      <div className="mx-[9px] mt-[6px] flex shrink-0 flex-col border-r-2 border-[#9a9a9a]">
        <Section title="草图类型" bodyClass="h-[62px] pt-[10px]">
          <Combo className="h-[38px] w-[429px] self-end">
            <svg width="25" height="24" viewBox="0 0 25 24">
              <path d="M8 3L24 5V21L9 18z" fill="#e8f2e8" stroke="#55606a" strokeWidth="1.500" />
              <path d="M4 4L13 13" stroke="#7a5a10" strokeWidth="6" />
              <path d="M4 4L12 12" stroke="#ffb41e" strokeWidth="4" />
              <path d="M1 2L5 5" stroke="#d03020" strokeWidth="5" />
              <path d="M10 14l5 2-2-6z" fill="#222" />
            </svg>
            <span className="pl-px">在平面上</span>
          </Combo>
        </Section>
        <Section title="草图平面" bodyClass="h-[147px] pt-[10px]">
          <div className="flex h-[34px] items-center justify-between">
            <span>平面方法</span>
            <Combo className="h-[33px] w-[193px]">现有平面</Combo>
          </div>
          <div className="mt-[3px] flex h-[47px] items-center rounded-l-[8px] bg-[linear-gradient(to_right,#e3a76c_0%,#e1aa73_30%,#d3d3d3_87%)] pl-[3px]">
            <Tick />
            <span className="flex-1 pl-[7px] [word-spacing:2px]">选择平的面或平面 (1)</span>
            <IconBtn className="h-[46px] w-[45px] border-t-[#b35a20] bg-[linear-gradient(to_bottom,#fbe3d6_0%,#f8b893_48%,#fb8a3c_52%,#fdc78d_100%)]">
              <svg width="32" height="34" viewBox="-16 -17 32 34" fill="none">
                <path d="M0-17V17" stroke="#5f4638" strokeWidth="2.500" />
                <path d="M-16 0H16" stroke="#222" strokeWidth="1.800" />
                <circle r="9" stroke="#e81414" strokeWidth="2" />
              </svg>
            </IconBtn>
          </div>
          <div className="mt-[4px] flex h-[36px] items-center justify-between">
            <span>反向</span>
            <IconBtn className={"h-[34px] w-[34px] " + silver}>
              <ReverseIcon />
            </IconBtn>
          </div>
        </Section>
        <Section title="草图方向" bodyClass="h-[148px] pt-[11px]">
          <div className="flex h-[33px] items-center justify-between">
            <span>参考</span>
            <Combo className="h-[33px] w-[193px]">水平</Combo>
          </div>
          <div className="mt-[3px] flex h-[48px] items-center pl-[3px]">
            <Tick />
            <span className="flex-1 pl-[7px] [word-spacing:2px]">选择参考 (1)</span>
            <IconBtn className={"h-[46px] w-[45px] " + silver}>
              <svg width="36" height="36" viewBox="0 0 36 36">
                <Cube dx={2} dy={0} />
                <path d="M3 8L20 12" stroke="#e01c30" strokeWidth="2.200" />
                <path d="M2 13l8 1v-2l8 5-9 3v-3l-7-1z" fill="#f28a1e" stroke="#a84a10" strokeWidth=".600" />
              </svg>
            </IconBtn>
          </div>
          <div className="mt-[3px] flex h-[36px] items-center justify-between">
            <span>反向</span>
            <IconBtn className={"h-[34px] w-[34px] " + silver}>
              <ReverseIcon />
            </IconBtn>
          </div>
        </Section>
        <Section title="草图原点" bodyClass="h-[71px] pt-[10px]">
          <div className="flex h-[47px] items-center pl-[3px]">
            <Tick />
            <span className="flex-1 pl-[7px]">指定点</span>
            <IconBtn className={"h-[34px] w-[33px] " + silver}>
              <svg width="26" height="26" viewBox="0 0 26 26" fill="none">
                <path d="M9 8H22M15.500 1V14" stroke="#222" strokeWidth="1.800" />
                <path d="M1 14c0 4 2 6 5 5v-3l6 5-6 4v-3c-4 1-7-4-5-8z" fill="#f28a1e" stroke="#b0461a" strokeWidth=".700" />
                <path d="M13 21h3v3h-3zM18 21h3v3h-3zM23 21h3v3h-3z" fill="#111" />
              </svg>
            </IconBtn>
            <div className={"ml-[6px] flex h-[46px] w-[71px] items-stretch overflow-hidden rounded-[5px] " + edge + " " + silver}>
              <div className="flex flex-1 items-center justify-center border-r border-[#aaa] pt-[3px]">
                <svg width="26" height="24" viewBox="0 0 26 24" fill="none">
                  <path d="M1 3H17V15" stroke="#b52ab8" strokeWidth="2.400" />
                  <path d="M9 14H25L17 23z" fill="#b52ab8" />
                </svg>
              </div>
              <DropBtn className="w-[24px] pt-[5px]" />
            </div>
          </div>
        </Section>
        <Section title="设置" bodyClass="h-[119px] pt-[8px]">
          <Check on label="创建中间基准 CSYS" />
          <Check on label="关联原点" />
          <Check label="投影工作部件原点" />
        </Section>
      </div>
      <div className="mx-[9px] mt-[4px] h-[3px] shrink-0 border-b-2 border-t border-b-white border-t-[#bbb]" />
      <div className="flex flex-1 items-start justify-end gap-[11px] pr-[26px] pt-[6px] text-[18px] text-black">
        <div className="flex h-[32px] w-[78px] items-center justify-center rounded-[5px] border-2 border-[#4c7a4a] bg-[linear-gradient(to_bottom,#f2f8f0_0%,#a6cf9e_45%,#6fc457_50%,#b2f48e_100%)]">
          确定
        </div>
        <div className={"flex h-[32px] w-[78px] items-center justify-center rounded-[5px] border-2 border-[#858585] " + silver}>取消</div>
      </div>
      <div className="h-[14px] shrink-0 border-t-2 border-[#444] bg-[#181818]" />
    </div>
  );
}

function Tooltip() {
  return (
    <div className="absolute left-[88px] top-[62px] h-[99px] w-[473px] rounded-[8px] border border-[#999] bg-gradient-to-b from-white to-[#eaeaea] pl-[9px] pt-[8px] text-[18px] leading-[23px] text-[#111] shadow-[3px_3px_3px_#777]">
      <div className="text-[19px] font-bold leading-[28px] tracking-[0.400px] text-[#0a0a22]">重新附着</div>
      <div className="mt-[6px] whitespace-nowrap">将草图附着到另一平的面、基准平面或路径，或者更改草</div>
      <div>图方位。</div>
    </div>
  );
}

export default function App() {
  return (
    <div className="h-[1162px] w-[1303px] overflow-hidden bg-white">
      <div className={"relative flex h-full w-full flex-col overflow-hidden rounded-[16px] bg-[#d3d4d6] " + FONT}>
        <Defs />
        <TopRow />
        <SecondRow />
        <div className="flex min-h-0 flex-1">
          <SideBar />
          <div className="relative flex-1 overflow-hidden">
            <Scene />
            <Dialog />
          </div>
        </div>
        <Tooltip />
        <svg width="86" height="26" viewBox="140 7 86 26" className="absolute left-[140px] top-[7px]">
          <path d="M143.500 24.500L161 16 160.500 20 220 11Q224 10.500 224 14 224 17 221 17.200L161 25.500 163 30.500z" fill="#fb5062" />
        </svg>
      </div>
    </div>
  );
}
